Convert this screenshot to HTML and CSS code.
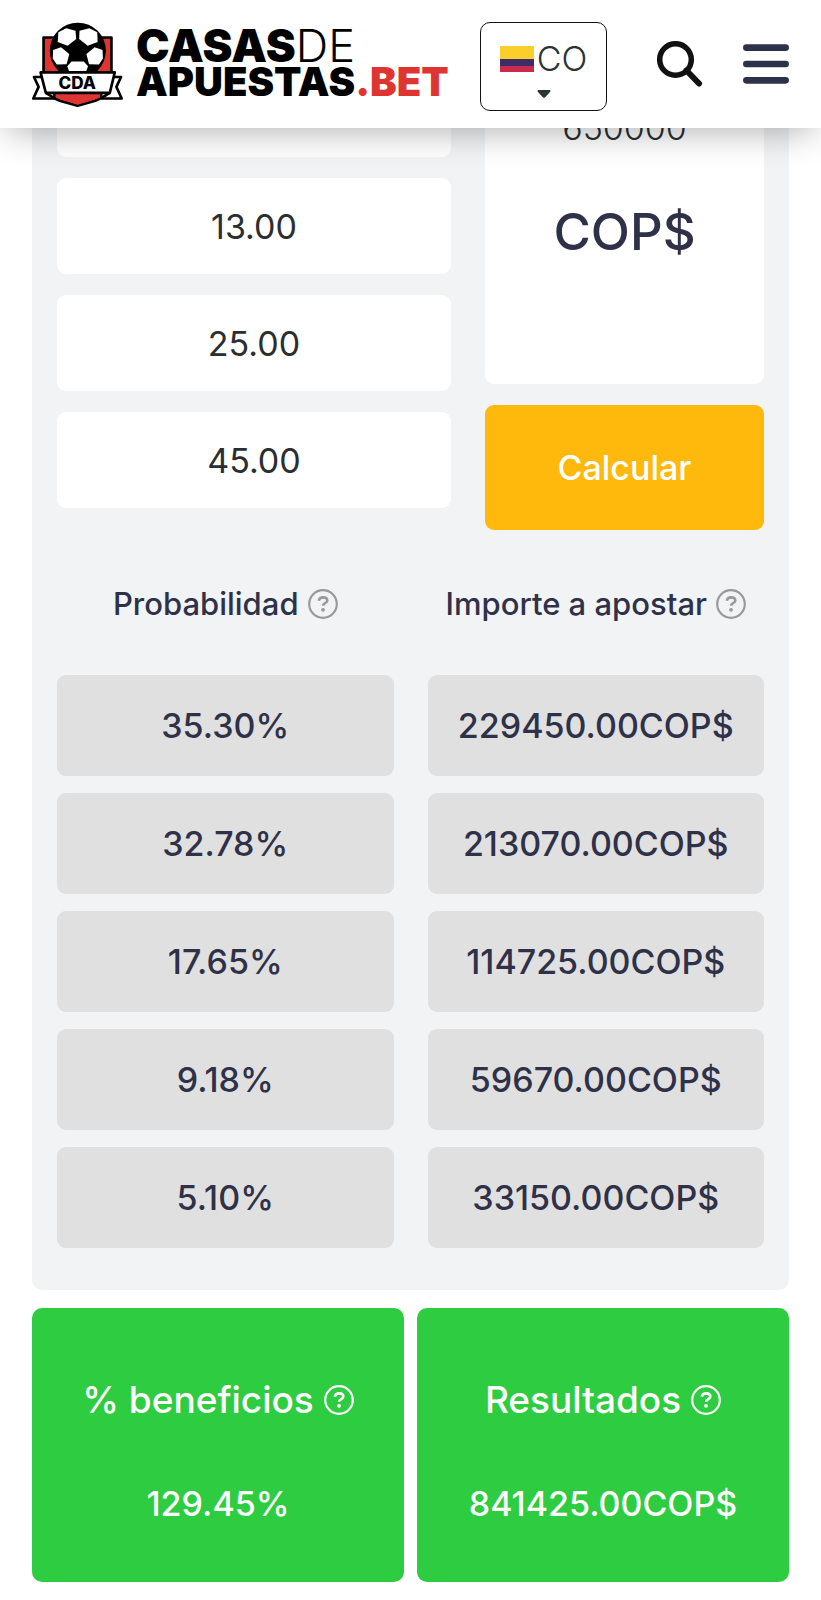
FILE: index.html
```html
<!DOCTYPE html>
<html lang="es">
<head>
<meta charset="utf-8">
<meta name="viewport" content="width=device-width, initial-scale=1">
<title>Calculadora de apuestas</title>
<link rel="stylesheet" href="styles.css">
</head>
<body>
<svg class="defs" aria-hidden="true">
  <symbol id="help" viewBox="0 0 30 30">
    <circle cx="15" cy="15" r="13.8" fill="none" stroke="currentColor" stroke-width="2.200"/>
    <path d="M10.800 11.800C11.200 9 13 8.400 15.100 8.400c2.300 0 4.200 1.100 4.200 3.200 0 2.700-4.300 2.400-4.300 5.200" fill="none" stroke="currentColor" stroke-width="2.600"/>
    <circle cx="15" cy="20.800" r="1.900" fill="currentColor"/>
  </symbol>
</svg>

<header class="header">
  <a class="logo" href="#" aria-label="Casas de apuestas punto bet">
    <svg class="logo-mark" viewBox="34 60 276 260" aria-hidden="true">
      <path d="M69 108H275V250Q272 280 226 300L172 315L118 300Q72 280 69 250Z" fill="#df3532" stroke="#000" stroke-width="8" stroke-linejoin="round"/>
      <circle cx="173" cy="148" r="85" fill="#000"/>
      <g fill="#fff">
        <path d="M114 92L138 80L166 88L168 113L142 133L112 122Z"/>
        <path d="M232 92L208 80L178 88L177 113L203 133L233 122Z"/>
        <path d="M98 146L122 138L147 158L139 189L109 190L97 172Z"/>
        <path d="M248 146L224 138L199 158L207 189L237 190L249 172Z"/>
        <path d="M154 181H191L204 195L198 212H147L141 195Z"/>
      </g>
      <path d="M62 228H40L54 258L38 293H102V272H244V293H306L290 258L304 228H282Z" fill="#fff" stroke="#000" stroke-width="8" stroke-linejoin="round"/>
      <path d="M106 276H240V291L172 312L106 291Z" fill="#df3532"/>
      <path d="M60 214H285L270 276H76Z" fill="#fff" stroke="#000" stroke-width="8" stroke-linejoin="round"/>
      <path d="M76 276L102 292M270 276L244 292" stroke="#000" stroke-width="8"/>
      <text class="logo-initials" x="171" y="265" text-anchor="middle">CDA</text>
    </svg>
    <span class="logo-text">
      <span class="logo-top">CASAS<span class="logo-thin">DE</span></span>
      <span class="logo-bottom">APUESTAS<span class="logo-red">.BET</span></span>
    </span>
  </a>
  <div class="actions">
    <button class="country" type="button" aria-haspopup="listbox">
      <span class="country-name">
        <svg class="flag" viewBox="0 0 34 28" aria-hidden="true">
          <path d="M0 1h34v13H0z" fill="#f9d02b"/><path d="M0 14h34v7H0z" fill="#3f2c66"/><path d="M0 21h34v6H0z" fill="#c92b4c"/>
        </svg>CO</span>
      <svg class="caret" viewBox="0 0 14 8" aria-hidden="true"><path d="M1 0H13Q14 1 13 2L8 7.500Q7 8 6 7.500L1 2Q0 1 1 0Z" fill="#2a3435"/></svg>
    </button>
    <button class="icon-button search" type="button" aria-label="Buscar">
      <svg viewBox="0 0 46 46" aria-hidden="true"><circle cx="18.500" cy="18.500" r="15.800" fill="none" stroke="#111" stroke-width="5.500"/><path d="M29.500 29.500L42 42.500" stroke="#111" stroke-width="6" stroke-linecap="round"/></svg>
    </button>
    <button class="icon-button" type="button" aria-label="Menú">
      <svg viewBox="0 0 45 45" aria-hidden="true"><path d="M3.300 6.500H41.700M3.300 22.500H41.700M3.300 38.500H41.700" stroke="#2e3148" stroke-width="6.500" stroke-linecap="round"/></svg>
    </button>
  </div>
</header>

<main class="main">
  <section class="panel">
    <form class="form">
      <div class="odds">
        <input class="field" type="text" aria-label="Cuota 2">
        <input class="field" type="text" aria-label="Cuota 3" value="13.00">
        <input class="field" type="text" aria-label="Cuota 4" value="25.00">
        <input class="field" type="text" aria-label="Cuota 5" value="45.00">
      </div>
      <div class="stake">
        <div class="stake-card">
          <input class="field" id="amount" type="text" value="650000">
          <label class="currency" for="amount">COP$</label>
        </div>
        <button class="calculate" type="button">Calcular</button>
      </div>
    </form>
    <table class="results">
      <thead>
        <tr>
          <th scope="col">Probabilidad<svg class="help" aria-hidden="true"><use href="#help"/></svg></th>
          <th scope="col">Importe a apostar<svg class="help" aria-hidden="true"><use href="#help"/></svg></th>
        </tr>
      </thead>
      <tbody>
        <tr><td>35.30%</td><td>229450.00COP$</td></tr>
        <tr><td>32.78%</td><td>213070.00COP$</td></tr>
        <tr><td>17.65%</td><td>114725.00COP$</td></tr>
        <tr><td>9.18%</td><td>59670.00COP$</td></tr>
        <tr><td>5.10%</td><td>33150.00COP$</td></tr>
      </tbody>
    </table>
  </section>
  <section class="totals">
    <div class="total">
      <h2>% beneficios<svg class="help" aria-hidden="true"><use href="#help"/></svg></h2>
      <p>129.45%</p>
    </div>
    <div class="total">
      <h2>Resultados<svg class="help" aria-hidden="true"><use href="#help"/></svg></h2>
      <p>841425.00COP$</p>
    </div>
  </section>
</main>
</body>
</html>
```
FILE: styles.css
```css
* { box-sizing: border-box; }

body {
  margin: 0;
  background: #fff;
  color: #2e3148;
  font-family: Inter, "Liberation Sans", sans-serif;
  font-weight: 500;
}

button, input { font: inherit; color: inherit; }

.defs { position: absolute; width: 0; height: 0; }

.header {
  position: sticky;
  top: 0;
  z-index: 2;
  display: flex;
  align-items: center;
  justify-content: space-between;
  height: 128px;
  padding: 0 32px;
  background: #fff;
  box-shadow: 0 12px 32px -8px rgba(0, 0, 0, 0.3);
}

.logo {
  display: flex;
  align-items: center;
  gap: 13px;
  color: #000;
  text-decoration: none;
}

.logo-mark { width: 91px; height: 87px; }
.logo-initials { font-size: 52px; font-weight: 800; }

.logo-text { display: flex; flex-direction: column; }
.logo-top { font-size: 45px; line-height: 36px; font-weight: 900; }
.logo-thin { font-weight: 300; }
.logo-bottom { font-size: 40px; line-height: 36px; font-weight: 900; }
.logo-red { color: #df3532; }

.actions { display: flex; align-items: center; }

.country {
  display: flex;
  flex-direction: column;
  align-items: center;
  justify-content: center;
  gap: 11px;
  width: 127px;
  height: 89px;
  margin: 4px 50px 0 0;
  padding: 4px 0 0;
  border: 1px solid #111;
  border-radius: 10px;
  background: #fff;
  color: #2a3435;
}

.country-name {
  display: flex;
  align-items: center;
  gap: 3px;
  font-size: 34px;
  line-height: 40px;
  font-weight: 300;
}

.flag { width: 34px; height: 28px; }
.caret { width: 14px; height: 8px; }

.icon-button { padding: 0; border: 0; background: none; }
.icon-button svg { display: block; width: 46px; height: 46px; }
.search { margin-right: 40px; }

/* The top of the calculator is scrolled under the sticky header. */
.main { margin-top: -92px; padding: 0 32px 17px; }

.panel {
  padding: 25px 25px 42px;
  border-radius: 10px;
  background: #f1f3f5;
}

.form {
  display: grid;
  grid-template-columns: 394fr 279fr;
  gap: 34px;
}

.odds, .stake { display: flex; flex-direction: column; gap: 21px; min-width: 0; }

.field {
  width: 100%;
  height: 96px;
  padding: 0;
  border: 0;
  border-radius: 9px;
  background: #fff;
  color: #2a2e30;
  font-size: 34px;
  font-weight: 400;
  text-align: center;
}

.stake-card {
  display: flex;
  flex-direction: column;
  align-items: center;
  height: 323px;
  padding-top: 18px;
  border-radius: 9px;
  background: #fff;
}

.stake-card .field { font-weight: 300; }

.currency { margin-top: 25px; font-size: 51px; line-height: 64px; }

.calculate {
  height: 125px;
  border: 0;
  border-radius: 9px;
  background: #ffb90d;
  color: #fff;
  font-size: 34px;
}

.results, .results thead, .results tbody { display: block; }

.results tr {
  display: grid;
  grid-template-columns: 1fr 1fr;
  gap: 34px;
}

.results thead { padding: 54px 0 51px; }
.results tbody tr + tr { margin-top: 17px; }

.results th {
  display: flex;
  align-items: center;
  justify-content: center;
  gap: 9px;
  padding: 0;
  font-size: 31px;
  line-height: 40px;
  font-weight: 500;
  white-space: nowrap;
}

.results td {
  padding: 31px 0 30px;
  border-radius: 9px;
  background: #e0e0e0;
  font-size: 34px;
  line-height: 40px;
  text-align: center;
}

.help { flex: none; width: 30px; height: 30px; }
.results .help { color: #999; }

.totals {
  display: grid;
  grid-template-columns: 1fr 1fr;
  gap: 13px;
  margin-top: 18px;
}

.total {
  padding: 66px 0 58px;
  border-radius: 10px;
  background: #2ecc40;
  color: #fff;
  text-align: center;
}

.total h2 {
  display: flex;
  align-items: center;
  justify-content: center;
  gap: 10px;
  margin: 0 0 58px;
  font-size: 37px;
  line-height: 52px;
  font-weight: 500;
}

.total p { margin: 0; font-size: 34px; line-height: 40px; }
```
